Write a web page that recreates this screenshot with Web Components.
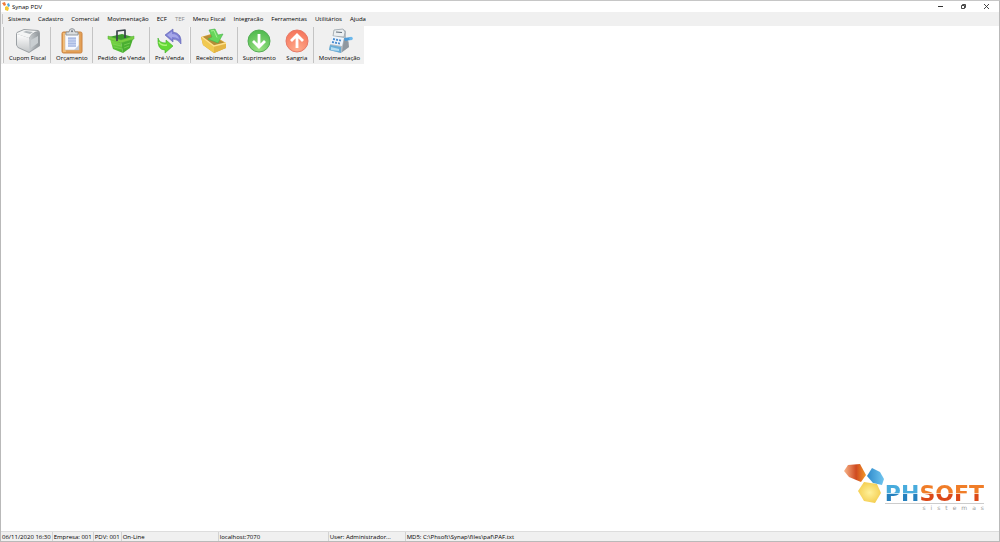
<!DOCTYPE html>
<html lang="pt-BR">
<head>
<meta charset="utf-8">
<title>Synap PDV</title>
<style>
html,body{height:100%;margin:0}
body{font:6px/8px "Open Sans","Noto Sans",sans-serif;color:#000;background:#fff;overflow:hidden}
svg{display:block}
</style>
</head>
<body>
<pdv-window>
  <title-bar slot="title">Synap PDV</title-bar>
  <menu-bar slot="menu">
    <menu-entry>Sistema</menu-entry><menu-entry>Cadastro</menu-entry><menu-entry>Comercial</menu-entry><menu-entry>Movimentação</menu-entry><menu-entry>ECF</menu-entry><menu-entry disabled>TEF</menu-entry><menu-entry>Menu Fiscal</menu-entry><menu-entry>Integracão</menu-entry><menu-entry>Ferramentas</menu-entry><menu-entry>Utilitários</menu-entry><menu-entry>Ajuda</menu-entry>
  </menu-bar>
  <tool-bar slot="tools">
    <tool-group grip>
      <tool-button label="Cupom Fiscal"><svg width="28" height="26" viewBox="0 0 28 26">
        <defs><linearGradient id="pa" x2="0" y2="1"><stop stop-color="#fff"/><stop offset="1" stop-color="#c3c6c8"/></linearGradient><linearGradient id="pb"><stop stop-color="#c9cdd0"/><stop offset="1" stop-color="#92989c"/></linearGradient></defs>
        <path d="M2 6 3 4 10 1 24 2Q26 3 26 5V18L15 25 4 20 2 17Z" fill="#9ba0a4"/><path d="M3 6 15 10V24L4 19 3 17Z" fill="url(#pa)"/><path d="M15 11Q17 6 21 5L25 5V17L15 24Z" fill="url(#pb)"/><path d="M3 5 10 2 24 3Q18 4 15 10L3 6Z" fill="#f4f5f5"/><path d="M9 4 12 3 19 4 16 6Z" fill="#b0b6ba"/><path d="M17 12 24 8V15L17 20Z" fill="#c9ced1"/></svg></tool-button>
    </tool-group>
    <tool-group>
      <tool-button label="Orçamento"><svg width="24" height="26" viewBox="0 0 24 26">
        <rect x="2" y="4" width="20" height="21" rx="1.5" fill="#e3a056" stroke="#cc8440"/><rect x="3" y="5" width="3" height="19" fill="#f3bd77"/><path d="M5 6H19V22H5Z" fill="#f8faff" stroke="#c9b8aa" stroke-width=".6"/><path d="M8 9H16V19H8Z" fill="#c3d0ee"/><path d="M8 10.500H16M8 13H16M8 15.500H16M8 18H16" stroke="#a2b4df" stroke-width=".8"/><path d="M14 22 19 17V22Z" fill="#c2cad9"/><path d="M6 7V4H9Q9 .6 12 .6T15 4H18V7Z" fill="#dadddf" stroke="#8b9196" stroke-width=".9"/><circle cx="12" cy="3.300" r="1" fill="#727980"/></svg></tool-button>
    </tool-group>
    <tool-group>
      <tool-button label="Pedido de Venda"><svg width="28" height="26" viewBox="0 0 28 26">
        <defs><linearGradient id="ba" x2="0" y2="1"><stop stop-color="#84dc4a"/><stop offset="1" stop-color="#46b32f"/></linearGradient></defs>
        <path d="M2 9 15 6 26 9 14 13Z" fill="#3a9a2c"/><path d="M3 11 14 14 16 25 6 21Z" fill="url(#ba)"/><path d="M14 14 26 11 23 20 16 25Z" fill="#4aaf31"/><path d="M1 8 14 12 27 8V11L14 15 1 11Z" fill="#79cf42" stroke="#52b038" stroke-width=".5"/><path d="m6 16 8 2m-7 1 8 2m2-4 6-2m-6 5 5-2" stroke="#8ade5f" stroke-width=".6"/><path d="M10 13V3L18 2V10" fill="none" stroke="#3c464c" stroke-width="1.700" stroke-linejoin="round"/></svg></tool-button>
    </tool-group>
    <tool-group>
      <tool-button label="Pré-Venda"><svg width="26" height="26" viewBox="0 0 26 26">
        <path d="M9 7 17 1V4Q26 5 25 16 22 11 17 11V14Z" fill="#7e80d3" stroke="#5d5fb3" stroke-width=".6"/><path d="M11 7 16 3.500V6Q22 6 23 11 20 9 16 9V11Z" fill="#a5a7e9"/><path d="M2 10Q3 15 10 15V12L17 18 9 25V22Q1 22 2 10Z" fill="#62d936" stroke="#3fae28" stroke-width=".6"/><path d="M3 14Q5 18 11 17" fill="none" stroke="#adf47b" stroke-width="1.500"/></svg></tool-button>
    </tool-group>
    <tool-group grip>
      <tool-button label="Recebimento"><svg width="28" height="26" viewBox="0 0 28 26">
        <path d="M1 9 11 6 26 15V20L14 25 3 17Z" fill="#d5a235"/><path d="M3 9 11 7 24 15 14 18Z" fill="#b48d38"/><path d="M1 9 14 18V25L3 17Z" fill="#f1c951"/><path d="M14 18 26 15V20L14 25Z" fill="#e4b544"/><path d="M2 9 14 18 26 15" fill="none" stroke="#ffe28d" stroke-width="1.500"/><path d="M9 2 15 1 18 7 23 6 18 15 8 11 12 9Z" fill="#66d65b" stroke="#45b34a" stroke-width=".6"/><path d="m11 3 3-.5 3 7" fill="none" stroke="#a4f091"/></svg></tool-button>
    </tool-group>
    <tool-group>
      <tool-button label="Suprimento"><svg width="24" height="26" viewBox="0 0 24 26">
        <defs><radialGradient id="ga" cy=".9" r=".9"><stop stop-color="#9be284"/><stop offset="1" stop-color="#4db94d"/></radialGradient></defs><circle cx="12" cy="13" r="11" fill="url(#ga)" stroke="#55ad55"/><path d="M12 6V19M6 13 12 19 18 13" fill="none" stroke="#fff" stroke-width="2.800"/></svg></tool-button>
      <tool-button label="Sangria"><svg width="24" height="26" viewBox="0 0 24 26">
        <defs><radialGradient id="ra" cy=".9" r=".9"><stop stop-color="#ffac8c"/><stop offset="1" stop-color="#f5735a"/></radialGradient></defs><circle cx="12" cy="13" r="11" fill="url(#ra)" stroke="#e67a68"/><path d="M12 20V7M6 13 12 7 18 13" fill="none" stroke="#fff" stroke-width="2.800"/></svg></tool-button>
    </tool-group>
    <tool-group>
      <tool-button label="Movimentação"><svg width="26" height="26" viewBox="0 0 26 26">
        <path d="m3 17 2-8 1-1 1-6 9-1 3 2v7l3 4v5l-8 6-12-3Z" fill="#b6bcc3"/><path d="m7 2 9-1 2 3-1 5-11-1Z" fill="#eceff1" stroke="#949da5" stroke-width=".7"/><path d="m9 4 6 .5" stroke="#606d79" stroke-width="1.200"/><path d="m5 8 12 2-2 8-12-2Z" fill="#eff5fc"/><path d="m6 11 2 .4m1 .2 2 .4m1 .2 2 .4m-9 1.400 2 .4m1 .2 2 .4m1 .2 2 .4" stroke="#4b8dd0" stroke-width="1.800"/><path d="m3 17 11 2v6L2 22Z" fill="#68add8"/><path d="m4 19 8 2v2l-8-1Z" fill="#b4ddf2"/><path d="m17 11 3-1 2 9-7 5Z" fill="#9098a0"/><path d="m17 10 7-1v3l-6 1Z" fill="#4a9bda"/><circle cx="24" cy="10.500" r="1.800" fill="#6db9ec"/></svg></tool-button>
    </tool-group>
  </tool-bar>
  <phsoft-logo></phsoft-logo>
  <status-bar slot="status">
    <status-cell>06/11/2020 16:30</status-cell><status-cell>Empresa: 001</status-cell><status-cell>PDV: 001</status-cell><status-cell style="--basis:97px">On-Line</status-cell><status-cell style="--basis:110px">localhost:7070</status-cell><status-cell style="--basis:77px">User: Administrador...</status-cell><status-cell class="last" style="--grow:1">MD5: C:\Phsoft\Synap\files\paf\PAF.txt</status-cell>
  </status-bar>
</pdv-window>
<script>
function define(name, html, setup) {
  const template = document.createElement('template');
  template.innerHTML = html;
  customElements.define(name, class extends HTMLElement {
    constructor() {
      super();
      this.attachShadow({mode: 'open'}).append(template.content.cloneNode(true));
    }
    connectedCallback() { if (setup) setup(this, this.shadowRoot); }
  });
}

define('pdv-window', `<style>
:host{display:flex;flex-direction:column;box-sizing:border-box;min-height:100vh;border:1px solid #b9b9b9;border-top-color:#c6c6c6;background:#fff}
main{flex:1;display:flex;justify-content:flex-end;align-items:flex-end;padding:0 15px 20px}
</style><slot name="title"></slot><slot name="menu"></slot><slot name="tools"></slot><main><slot></slot></main><slot name="status"></slot>`);

define('title-bar', `<style>
:host{display:flex;align-items:center;height:11px;padding:0 1px}
svg{display:block}
.name{flex:1;margin-left:2px}
button{all:unset;width:23px;height:10px;display:grid;place-items:center}
</style><svg width="8" height="9" viewBox="0 0 8 9"><path d="m0 1 3-1 1 3-2 1Z" fill="#ef7a37"/><path d="m5 2 2-1 1 3-2 1Z" fill="#4ba7dc"/><path d="m3 5 2-1 2 2-1 3-3-1Z" fill="#f5c830"/></svg>
<span class="name"><slot></slot></span>
<button aria-label="Minimizar"><svg width="7" height="7"><path d="M1 3.500H6" stroke="#333"/></svg></button>
<button aria-label="Restaurar"><svg width="7" height="7" fill="none" stroke="#333" stroke-width=".9"><path d="M1.500 2.500h3v3h-3zM2.500 2.500v-1h3v3h-1"/></svg></button>
<button aria-label="Fechar"><svg width="7" height="7"><path d="m1 1 5 5m0-5-5 5" stroke="#333" stroke-width=".9"/></svg></button>`);

define('menu-bar', `<style>
:host{display:block;background:#f0f0f0}
nav{display:flex;gap:8px;height:14px;align-items:center;padding-left:1px}
.grip{width:1px;height:10px;background:#c8c8c8;margin-right:-3px}
</style><nav aria-label="Menu"><span class="grip"></span><slot></slot></nav>`);

define('menu-entry', `<style>
:host{display:block}
button{all:unset;display:block;white-space:nowrap}
button:disabled{color:#888}
</style><button><slot></slot></button>`, (host, root) => {
  root.querySelector('button').disabled = host.hasAttribute('disabled');
});

define('tool-bar', `<style>
:host{display:flex;align-self:flex-start;height:38px;background:#f0f0f0}
</style><slot></slot>`);

define('tool-group', `<style>
:host{display:flex;align-items:stretch}
:host::before{content:"";width:1px;background:#c4c4c4;margin:1px 0}
:host([grip])::before{border-left:1px solid #fafafa;margin-left:1px}
</style><slot></slot>`);

define('tool-button', `<style>
:host{display:block}
button{all:unset;display:flex;flex-direction:column;align-items:center;padding:2px 4px 0 5px;white-space:nowrap}
</style><button><slot></slot><span></span></button>`, (host, root) => {
  root.querySelector('span').textContent = host.getAttribute('label');
});

define('phsoft-logo', `<style>
:host{display:flex;align-items:flex-start}
svg{display:block}
.text{padding-top:21px}
.word{display:flex;font:bold 22px/18px "DejaVu Sans",sans-serif;border-bottom:1px solid #ccc}
.word span{color:transparent;background:linear-gradient(#f07d28 8px,#fbd0b0 8px,#fbd0b0 9px,#dc4817 9px);-webkit-background-clip:text;background-clip:text}
.word .ph{background:linear-gradient(#48abdc 8px,#c5e4f4 8px,#c5e4f4 9px,#247fbd 9px);-webkit-background-clip:text;background-clip:text}
.sub{font:6px/7px "DejaVu Sans",sans-serif;letter-spacing:5px;color:#999;text-align:right;margin-right:-5px}
</style><svg width="41" height="40" viewBox="0 0 41 40">
<defs><linearGradient id="o"><stop stop-color="#f8b58a"/><stop offset=".55" stop-color="#cf4a20"/><stop offset="1" stop-color="#f39a29"/></linearGradient><linearGradient id="b"><stop stop-color="#2f8acb"/><stop offset="1" stop-color="#70c5ef"/></linearGradient><radialGradient id="y"><stop stop-color="#fff19a"/><stop offset="1" stop-color="#f5d055"/></radialGradient></defs>
<path d="M0 7 4 1 16 0 22 11 17 18 5 13Z" fill="url(#o)"/><path d="M23 12 28 4 36 8 40 15 38 21 29 19Z" fill="url(#b)"/><path d="M14 27 20 18 33 20 37 29 31 39 20 37Z" fill="url(#y)"/></svg>
<div class="text"><div class="word"><span class="ph">PH</span><span>SOFT</span></div><div class="sub">sistemas</div></div>`);

define('status-bar', `<style>
:host{display:flex;line-height:10px;height:9px;background:#f0f0f0;border-top:1px solid #ddd}
</style><slot></slot>`);

define('status-cell', `<style>
:host{display:block;box-sizing:border-box;flex:var(--grow,0) 0 var(--basis,auto);padding:0 1px;border-right:1px solid #d2d2d2;white-space:nowrap}
:host(.last){border-right:0}
</style><slot></slot>`);
</script>
</body>
</html>
